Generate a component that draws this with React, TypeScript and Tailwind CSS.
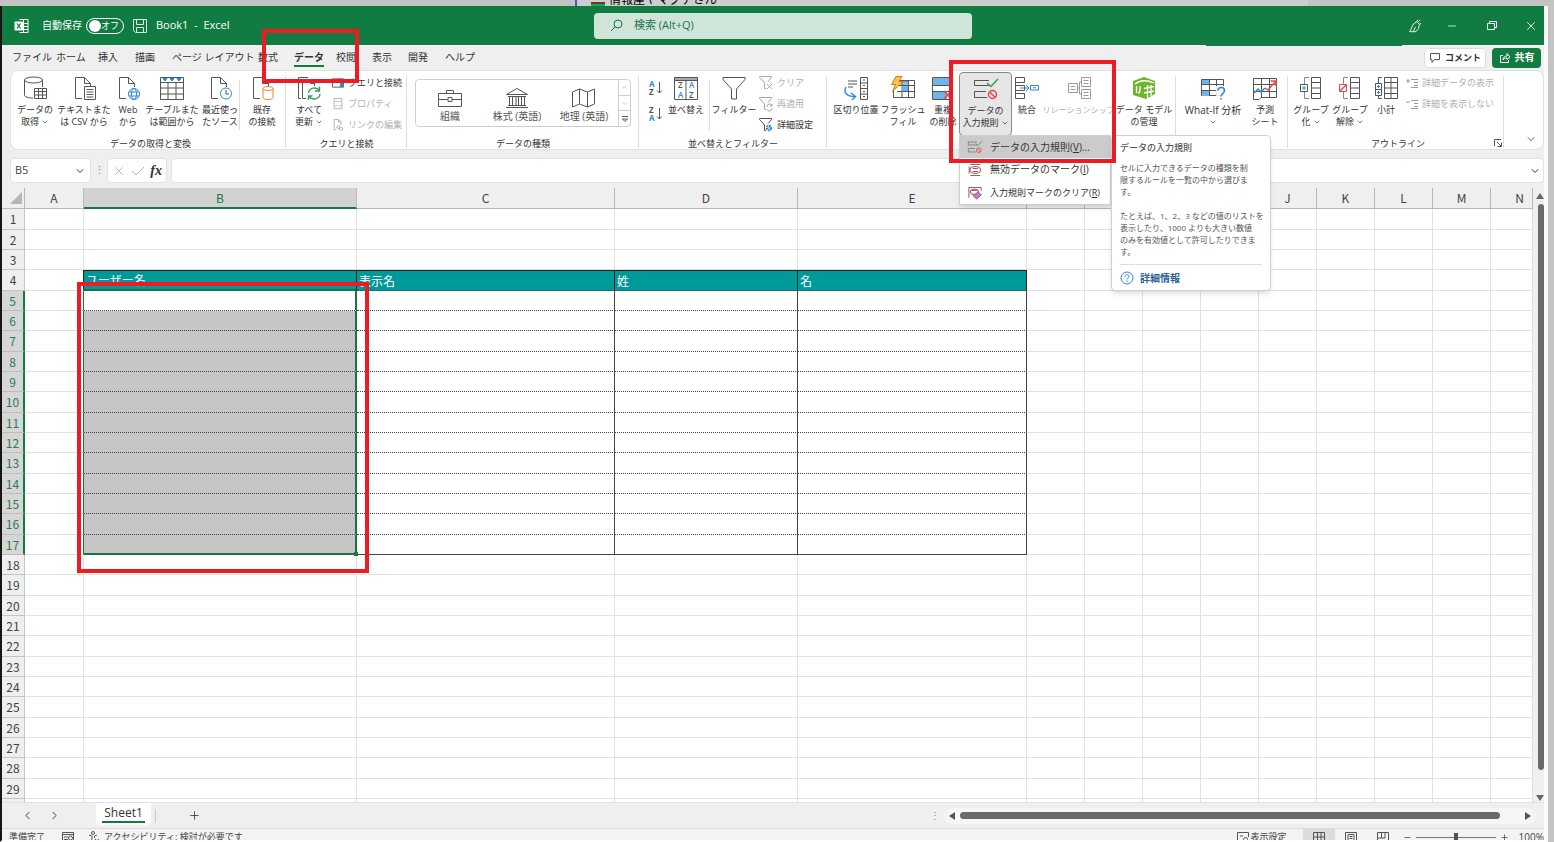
import type { ReactNode } from "react";
import { ChevronDown, ChevronLeft, ChevronRight, ChevronUp, Minus, Plus, Search, X } from "lucide-react";

const GRAY = "#555";
const BLUE = "#2b88d8";
const GREEN = "#3d9a5f";
const RED = "#e5484d";

const Svg = ({
  children,
  className = "size-6",
  box = "0 0 24 24",
}: {
  children: ReactNode;
  className?: string;
  box?: string;
}) => (
  <svg
    viewBox={box}
    className={`shrink-0 overflow-visible ${className}`}
    fill="none"
    stroke={GRAY}
    strokeWidth="1"
    aria-hidden="true"
  >
    {children}
  </svg>
);

const docPath = "M10 22.5H3.5v-21h9l6 6V11M12.5 1.5v6h6";

const DatabaseIcon = () => (
  <Svg>
    <ellipse cx="10.5" cy="4" rx="9" ry="3" />
    <path d="M1.500 4v15c0 1.700 3.500 3 8.500 3M19.500 4v7" />
    <path d="M11.500 12.500h12v10h-12zM11.500 15.500h12M11.500 19h12M15.500 12.500v10M19.500 12.500v10" />
  </Svg>
);

const TextFileIcon = () => (
  <Svg>
    <path d={docPath} />
    <path d="M12.500 10.500h11v13h-11zM14.500 13.500h7M14.500 16h7M14.500 18.500h7M14.500 21h7" />
  </Svg>
);

const WebIcon = () => (
  <Svg>
    <path d={docPath} />
    <g stroke={BLUE}>
      <circle cx="18" cy="18" r="5.500" />
      <ellipse cx="18" cy="18" rx="2.500" ry="5.500" />
      <path d="M13 16h10M13 20h10" />
    </g>
  </Svg>
);

const TableIcon = () => (
  <Svg>
    <path d="M.5 1.500h23v22H.5zM.5 6.500h23M.5 12h23M.5 18h23M8 6.500v17M16 6.500v17" />
    <path d="M3 2.500h4L5 5zM10 2.500h4L12 5zM17 2.500h4L19 5z" fill={BLUE} stroke={BLUE} />
  </Svg>
);

const RecentIcon = () => (
  <Svg>
    <path d={docPath} />
    <circle cx="18" cy="17.500" r="5.500" stroke={BLUE} />
    <path d="M18 14v4h3" />
  </Svg>
);

const ExistingIcon = () => (
  <Svg>
    <path d={docPath} />
    <g stroke="#e8872b">
      <ellipse cx="18" cy="12.500" rx="5" ry="2" />
      <path d="M13 12.500v9c0 2.700 10 2.700 10 0v-9" />
    </g>
  </Svg>
);

const RefreshAllIcon = () => (
  <Svg>
    <path d="M4 22.500H1.500v-21H11M9 22.500H5.500v-19h8l4 4V10M13.500 3.500v4h4" />
    <path
      d="M11.500 17a6 5.500 0 0 1 11-2.500M22.500 10.500v4.500H18M23 18a6 5.500 0 0 1-11 2.500M11.500 24v-4h4"
      stroke={GREEN}
      strokeWidth="1.400"
    />
  </Svg>
);

const QueryIcon = () => (
  <Svg className="h-3 w-3" box="0 0 13 12">
    <path d="M.5 1.500h12v9H.5zM.5 3.500h12" />
    <path d="M9 4h3v6H9z" fill={BLUE} stroke={BLUE} />
  </Svg>
);

const PropertiesIcon = () => (
  <Svg className="h-3 w-3" box="0 0 12 14">
    <g stroke="#a8a8a8">
      <path d="M1.500.5h9v12h-9zM3 4h2M3 9h2M6.500 4H9M6.500 9H9" />
    </g>
  </Svg>
);

const LinksIcon = () => (
  <Svg className="h-3 w-3" box="0 0 12 14">
    <g stroke="#a8a8a8">
      <path d="M4 12.500H1.500V.5h5l3 3V7M6.500.5v3h3" />
      <rect x="4.500" y="8" width="4" height="3" rx="1.500" />
      <rect x="7.500" y="10" width="4" height="3" rx="1.500" />
    </g>
  </Svg>
);

const BriefcaseIcon = () => (
  <Svg className="h-5 w-6" box="0 0 24 20">
    <path d="M.5 5.500h23v13H.5zM8.500 5.500v-3h7v3M.5 11.500h9M14 11.500h9.500M10 9.500h4v4h-4z" />
  </Svg>
);

const BankIcon = () => (
  <Svg className="h-5 w-6" box="0 0 24 20">
    <path d="M1.500 6.500 12 .5l10.500 6zM3 8.500h18M4.500 9v8M7.500 9v8M11 9v8M13.500 9v8M16.500 9v8M19.500 9v8M3 17.500h18M1 19.500h22" />
  </Svg>
);

const MapIcon = () => (
  <Svg className="h-5 w-6" box="0 0 24 20">
    <path d="M.5 4l7-3 8 3 7-3v15l-7 3-8-3-7 3zM7.500 1v15M15.500 4v15" />
  </Svg>
);

const SortIcon = ({ first, second, desc }: { first: string; second: string; desc?: boolean }) => (
  <Svg className="h-4 w-4" box="0 0 16 16">
    <g stroke="none" fontSize="8" fontWeight="700" fontFamily="Open Sans">
      <text x="1" y="7" fill={desc ? GRAY : BLUE}>{first}</text>
      <text x="1" y="15" fill={desc ? BLUE : GRAY}>{second}</text>
    </g>
    <path d="M11.500 2v11M9 10.500l2.500 2.500 2.500-2.500" />
  </Svg>
);

const SortDialogIcon = () => (
  <Svg>
    <path d="M.5 1.500h23v22H.5z" />
    <path d="M.5 1.500h23v3H.5z" fill="#aaa" />
    <path d="M12 4.500v19" />
    <g stroke="none" fontSize="8" fontWeight="600" fontFamily="Open Sans">
      <text x="4" y="12" fill={GRAY}>Z</text>
      <text x="4" y="22" fill={BLUE}>A</text>
      <text x="15" y="12" fill={BLUE}>A</text>
      <text x="15" y="22" fill={GRAY}>Z</text>
    </g>
  </Svg>
);

const FilterIcon = () => (
  <Svg>
    <path d="M1 1.500h22v2L14.500 13v10h-5V13L1 3.500z" />
  </Svg>
);

const SmallFilterIcon = ({ kind }: { kind: "clear" | "reapply" | "advanced" }) => (
  <Svg className="h-3.5 w-3.5" box="0 0 14 14">
    <g stroke={kind === "advanced" ? GRAY : "#a8a8a8"}>
      <path d="M7 12.500H5.500V7L.5 1.500V.5h12v1L9 5.500" />
      {kind === "clear" && <path d="M8 8l5 5M13 8l-5 5" />}
      {kind === "reapply" && <path d="M8 10a2.500 2.500 0 0 1 5-1M13 7v2h-2M13 11a2.500 2.500 0 0 1-5 1" />}
    </g>
    {kind === "advanced" && <circle cx="10" cy="10" r="2" stroke={BLUE} strokeWidth="2.500" strokeDasharray="1.500 .6" />}
  </Svg>
);

const SplitIcon = () => (
  <Svg>
    <path d="M16.500 1.500h7v22h-7zM16.500 7h7M16.500 12.500h7M16.500 18h7M19 4h2M19 9.500h2M19 15.500h2M19 20.500h2M4 5h9M4 8h9M4 11h5" />
    <path d="M2 11c-3 6 1 9.500 9 9.500M7 17l4.500 3.500L8 24" stroke={BLUE} strokeWidth="1.400" />
  </Svg>
);

const FlashFillIcon = () => (
  <Svg>
    <path d="M11 5h6.500v4.500H11z" fill="#8cc1ee" />
    <path d="M8 4.500h15.500v17H2.500V15M6 9.500h17.500M6 15.500h17.500M11 9v12.500M17.500 4.500v17" />
    <path d="M11 10h6v5h-6z" fill="#6fb4ea" stroke="none" />
    <path d="M5 .5h6L8 5.500h4L1.500 15.500l3-7h-4z" fill="#ffc24a" stroke="#cf7b18" />
  </Svg>
);

const DuplicateIcon = () => (
  <Svg>
    <path d="M1.500 1.500h17v22h-17z" />
    <path d="M2 2h16v7H2zM2 16h14v7H2z" fill="#6fb4ea" stroke="none" />
    <path d="M1.500 9.500h17M1.500 15.500h17" />
    <path d="M13 15l7 8M20 15l-7 8" stroke={RED} strokeWidth="1.500" />
  </Svg>
);

const ValidationIcon = ({ className }: { className?: string }) => (
  <Svg className={className}>
    <path d="M15 3.500H.5v5H16M12 14.500H.5v6H13" />
    <path d="M13 6l4 3.500L24 2" stroke={GREEN} strokeWidth="1.500" />
    <circle cx="18.500" cy="17.500" r="4" stroke={RED} strokeWidth="1.500" />
    <path d="M15.500 15l6 5.500" stroke={RED} strokeWidth="1.500" />
  </Svg>
);

const CircleInvalidIcon = () => (
  <Svg className="h-3.5 w-3.5">
    <path d="M4 2.500h17M4 21.500h17M2 6v12M8 9.500h9M8 14.500h9" strokeWidth="1.500" />
    <ellipse cx="12.500" cy="12" rx="9" ry="6" stroke={RED} strokeWidth="2" />
  </Svg>
);

const ClearInvalidIcon = () => (
  <Svg className="h-3.5 w-3.5">
    <path d="M1.500 20V2.500h21V8M6 7.500h10" strokeWidth="1.500" />
    <ellipse cx="11" cy="10" rx="7" ry="4.500" stroke={RED} strokeWidth="1.800" />
    <path d="M9 17l8-7 6 5-8 7.500z" fill="#c77fc9" stroke="#8e4a9e" strokeWidth="1.500" />
  </Svg>
);

const ConsolidateIcon = () => (
  <Svg>
    <path d="M.5 1.500h9v5h-9zM.5 6.500v11M.5 9.500h9v5h-9M.5 17.500h9v5h-9z" />
    <path d="M5 12h9M11 9l3 3-3 3M15.500 9.500h8v4.500h-8zM18 11.800h3" stroke={BLUE} />
  </Svg>
);

const RelationIcon = () => (
  <Svg>
    <g stroke="#9b9b9b">
      <path d="M1.500 7.500h9v9h-9zM14.500 1.500h9v9h-9zM14.500 13.500h9v9h-9zM10.500 12h2v6h2M12.500 12V6h2M3.500 10.500h5M3.500 13.500h5M16.500 4.500h5M16.500 7.500h5M16.500 16.500h5M16.500 19.500h5" />
    </g>
  </Svg>
);

const ModelIcon = () => (
  <Svg>
    <path d="M1 5l11-4 11 4v13l-9 5L1 19z" fill="#6fb52c" stroke="none" />
    <path
      d="M3 8c5-4 12-4 19-1M4.500 10v7M8 10v4c0 2-1 3-2 3M15.500 9v13M19 9v11M12 12.500l10-2M12 17l10-2"
      stroke="#fff"
      strokeWidth="1.300"
    />
  </Svg>
);

const WhatIfIcon = () => (
  <Svg>
    <path d="M.5 3.500h22v16H.5z" />
    <path d="M1 4h7v5H1zM1 14.500h7V20H1z" fill="#6fb4ea" stroke="none" />
    <path d="M.5 8.500h22M.5 14.500h22M8.500 3.500v16M15.500 3.500v16" />
    <path d="M15 10h10v15H15z" fill="#fff" stroke="none" opacity=".85" />
    <path d="M17 14.500c0-4 6.500-4 6.500 0 0 3-3.500 3-3.500 6M20 22v1.500" stroke={BLUE} strokeWidth="1.600" />
  </Svg>
);

const ForecastIcon = () => (
  <Svg>
    <path d="M.5 2.500h23v19H8l-2 2H.5zM.5 8.500h23M.5 15.500h23M8.500 2.500v19M16.500 2.500v19" />
    <path d="M1 17l4-4 3 3 4-4" stroke={BLUE} strokeWidth="1.500" />
    <path d="M12 12l3 2 7-8M17.500 5H23v5" stroke={RED} strokeWidth="1.500" />
  </Svg>
);

const GroupIcon = ({ ungroup }: { ungroup?: boolean }) => (
  <Svg>
    <path d="M12.500 1.500h9v21h-9zM12.500 6.500h9M12.500 12h9M12.500 17.500h9" />
    <path d="M10 1.500H5.500V8M5.500 16v6.500H10" stroke="#888" />
    <path d="M1.500 8.500h7v7h-7z" fill="#fff" stroke={ungroup ? RED : GRAY} />
    {ungroup ? <path d="M2 15l6-6" stroke={RED} strokeWidth="1.500" /> : <path d="M5 10v4M3 12h4" stroke={BLUE} />}
  </Svg>
);

const SubtotalIcon = () => (
  <Svg>
    <path d="M10.500 1.500h13v21h-13zM10.500 6.500h13M10.500 12h13M10.500 17.500h13M17 1.500v21M8 1.500H4.500V7M4.500 20v2.500H8" />
    <path d="M1.500 7.500h6v6h-6zM1.500 13.500h6v6h-6z" />
    <path d="M4.500 9v3M3 10.500h3M4.500 15v3M3 16.500h3" stroke={BLUE} />
  </Svg>
);

const DetailIcon = ({ sign }: { sign: "plus" | "minus" }) => (
  <Svg className="h-3 w-3" box="0 0 12 12">
    <g stroke="#9b9b9b">
      <path d={sign === "plus" ? "M0 4h4M2 2v4" : "M0 4h4"} />
      <path d="M5 2.500h7M8 5.500h4M8 8.500h4M5 10.500h7" />
    </g>
  </Svg>
);

const ExcelIcon = () => (
  <Svg className="size-4" box="0 0 16 16">
    <g stroke="#fff">
      <path d="M5.500 1.500h8.500v13H5.500M9.500 1.500v13M5 5.500h9M9 8.500h5M5 11.500h9" />
      <path d="M1 4h7.500v8H1z" fill="#fff" />
      <path d="M3 5.500l3.500 5M6.500 5.500L3 10.500" stroke="#107c41" strokeWidth="1.300" />
    </g>
  </Svg>
);

const SaveIcon = () => (
  <Svg className="size-4" box="0 0 16 16">
    <path d="M1.500 1.500h13v13h-11l-2-2zM4.500 1.500v5h7v-5M4.500 14.500v-5h7v5" stroke="#d9efe2" />
  </Svg>
);

const PenIcon = () => (
  <Svg className="size-3.5" box="0 0 16 16">
    <path d="M2 14.500L6 6l4-3 3 3-1 5-3 3.500zM6 14.500L8.500 9M10 3l1-2M13 6l2-1M12 3l2-2" stroke="#fff" />
  </Svg>
);

type BigButtonProps = {
  icon: ReactNode;
  lines: string[];
  width: string;
  text?: string;
  disabled?: boolean;
  caret?: boolean;
};

const BigButton = ({ icon, lines, width, text = "text-[9px]", disabled, caret }: BigButtonProps) => (
  <button
    disabled={disabled}
    className={`flex h-16 shrink-0 flex-col items-center gap-1 whitespace-nowrap pt-1 leading-3 ${width} ${text} ${
      disabled ? "text-[#b0b0b0]" : ""
    }`}
  >
    {icon}
    <span className="flex flex-col items-center">
      {lines.map((line, i) => (
        <span key={line} className="flex h-3 items-center gap-0.5">
          {line}
          {caret && i === lines.length - 1 && <ChevronDown size={8} />}
        </span>
      ))}
    </span>
  </button>
);

const SmallButton = ({ icon, label, disabled }: { icon: ReactNode; label: string; disabled?: boolean }) => (
  <button
    disabled={disabled}
    className={`flex h-[21px] items-center gap-1 whitespace-nowrap text-[9px] ${disabled ? "text-[#b0b0b0]" : ""}`}
  >
    {icon}
    {label}
  </button>
);

const Group = ({ label, width, children }: { label?: string; width: string; children: ReactNode }) => (
  <section className={`relative flex shrink-0 flex-col ${width}`}>
    <div className="flex h-16 shrink-0">{children}</div>
    <div className="text-center text-[9px] leading-4">{label}</div>
    <span className="absolute right-0 top-1 h-[72px] w-px bg-[#dcdcdc]" />
  </section>
);

const Divider = () => <span className="mt-2 h-[50px] w-px shrink-0 bg-[#dcdcdc]" />;

const tabs = [
  { name: "ファイル", width: "w-[44px]" },
  { name: "ホーム", width: "w-[42px]" },
  { name: "挿入", width: "w-[37px]" },
  { name: "描画", width: "w-[37px]" },
  { name: "ページ レイアウト", width: "w-[86px]" },
  { name: "数式", width: "w-[36px]" },
  { name: "データ", width: "w-[42px]" },
  { name: "校閲", width: "w-[36px]" },
  { name: "表示", width: "w-[36px]" },
  { name: "開発", width: "w-[37px]" },
  { name: "ヘルプ", width: "w-[42px]" },
];

const TitleBar = () => (
  <header className="relative flex h-[39px] shrink-0 items-center bg-[#107c41] text-white">
    <div className="flex w-[592px] shrink-0 items-center pl-3 text-[10px]">
      <ExcelIcon />
      <label className="ml-3 flex items-center gap-1">
        自動保存
        <input type="checkbox" className="peer sr-only" />
        <span className="flex h-4 w-[38px] items-center justify-between rounded-full border border-white pl-0.5 pr-1 text-[9px]">
          <span className="size-3 rounded-full bg-white" />
          オフ
        </span>
      </label>
      <button aria-label="上書き保存" className="ml-2">
        <SaveIcon />
      </button>
      <span className="ml-2 text-[11px]">Book1&nbsp; -&nbsp; Excel</span>
    </div>
    <label className="flex h-[26px] w-[378px] items-center gap-2.5 rounded-sm bg-[#cfe5d9] px-4 text-[#1c7445]">
      <Svg className="size-3.5" box="0 0 14 14">
        <circle cx="8" cy="5" r="4" stroke="#1c7445" />
        <path d="M5 8l-4 4" stroke="#1c7445" />
      </Svg>
      <input
        aria-label="検索"
        placeholder="検索 (Alt+Q)"
        className="w-full text-[11px] outline-none placeholder:text-[#1c7445]"
      />
    </label>
    <div className="ml-auto flex items-center gap-6 pr-1.5">
      <button aria-label="ペン"><PenIcon /></button>
      <button aria-label="最小化"><Minus size={12} strokeWidth={1.5} /></button>
      <button aria-label="元に戻す" className="ml-1">
        <Svg className="size-3" box="0 0 12 12">
          <path d="M1.500 3.500h7v6h-7zM3.500 3.500v-2h7v6h-2" stroke="#fff" />
        </Svg>
      </button>
      <button aria-label="閉じる" className="ml-0.5"><X size={14} strokeWidth={1.5} /></button>
    </div>
    <span className="absolute right-[142px] top-full h-px w-[196px] bg-[#107c41]" />
  </header>
);

const TabRow = () => (
  <nav className="flex h-[25px] shrink-0 items-center justify-between pl-2.5 pr-[3px]">
    <div className="flex">
      {tabs.map((tab) => (
        <button key={tab.name} className={`flex shrink-0 whitespace-nowrap text-left text-[10px] leading-4 ${tab.width}`}>
          <span className={tab.name === "データ" ? "border-b-2 border-[#107c41] font-bold" : "border-b-2 border-transparent"}>
            {tab.name}
          </span>
        </button>
      ))}
    </div>
    <div className="flex gap-1.5 text-[9px] font-bold">
      <button className="flex h-5 items-center gap-1 rounded border border-[#ddd] bg-white px-1">
        <Svg className="size-3" box="0 0 12 12">
          <path d="M1.500 1.500h9v6h-5l-2.500 3v-3H1.500z" />
        </Svg>
        コメント
      </button>
      <button className="flex h-5 w-[49px] items-center justify-center gap-1 rounded bg-[#107c41] text-[10px] text-white">
        <Svg className="size-3" box="0 0 12 12">
          <path d="M4 3.500H1.500v7h8V8M4 8c0-3 2-4 4-4V1.500L11 5 8 7.500V6C6 6 5 6.500 4 8z" stroke="#fff" />
        </Svg>
        共有
      </button>
    </div>
  </nav>
);

const ValidationMenu = () => (
  <div className="absolute -left-px top-full z-20 flex items-start text-[10px]">
    <ul role="menu" className="w-[152px] border border-[#d0d0d0] bg-white shadow-md">
      <li>
        <button role="menuitem" className="flex h-[22px] w-full items-center gap-2 whitespace-nowrap bg-[#cbcbcb] pl-2">
          <ValidationIcon className="h-3.5 w-3.5" />
          <span>データの入力規則(<u>V</u>)...</span>
        </button>
      </li>
      <li>
        <button role="menuitem" className="flex h-[23px] w-full items-center gap-2 whitespace-nowrap pl-2">
          <CircleInvalidIcon />
          <span>無効データのマーク(<u>I</u>)</span>
        </button>
      </li>
      <li>
        <button role="menuitem" className="flex h-[23px] w-full items-center gap-2 whitespace-nowrap pl-2 text-[9px]">
          <ClearInvalidIcon />
          <span>入力規則マークのクリア(<u>R</u>)</span>
        </button>
      </li>
    </ul>
    <div role="tooltip" className="w-[160px] rounded-sm border border-[#d0d0d0] bg-white px-2 text-[8px] leading-3 text-[#555] shadow-md">
      <p className="pb-1.5 pt-1 text-[9px] font-medium leading-4">データの入力規則</p>
      <p className="mb-3 whitespace-nowrap">
        セルに入力できるデータの種類を制
        <br />
        限するルールを一覧の中から選びま
        <br />
        す。
      </p>
      <p className="whitespace-nowrap">
        たとえば、1、2、3 などの値のリストを
        <br />
        表示したり、1000 よりも大きい数値
        <br />
        のみを有効値として許可したりできま
        <br />
        す。
      </p>
      <a href="#" className="mt-1.5 flex h-[26px] items-center gap-1.5 border-t border-[#ddd] text-[10px] font-bold text-[#2a5f95]">
        <Svg className="size-3.5" box="0 0 14 14">
          <circle cx="7" cy="7" r="6" stroke={BLUE} />
          <path d="M5 5.500c0-2.500 4-2.500 4 0 0 1.500-2 1.500-2 3M7 9.500v1.500" stroke={BLUE} />
        </Svg>
        詳細情報
      </a>
    </div>
  </div>
);

const Ribbon = () => (
  <div className="relative ml-2 flex h-20 shrink-0 rounded-lg border border-[#e2e2e2] bg-white pt-px">
    <Group label="データの取得と変換" width="w-[275px] pl-1">
      <BigButton icon={<DatabaseIcon />} lines={["データの", "取得"]} width="w-[40px]" caret />
      <BigButton icon={<TextFileIcon />} lines={["テキストまた", "は CSV から"]} width="w-[58px]" />
      <BigButton icon={<WebIcon />} lines={["Web", "から"]} width="w-[30px]" />
      <BigButton icon={<TableIcon />} lines={["テーブルまた", "は範囲から"]} width="w-[58px]" />
      <BigButton icon={<RecentIcon />} lines={["最近使っ", "たソース"]} width="w-[38px]" />
      <Divider />
      <BigButton icon={<ExistingIcon />} lines={["既存", "の接続"]} width="w-[44px]" />
    </Group>

    <Group label="クエリと接続" width="w-[121px]">
      <BigButton icon={<RefreshAllIcon />} lines={["すべて", "更新"]} width="w-[46px]" caret />
      <div className="flex flex-col">
        <SmallButton icon={<QueryIcon />} label="クエリと接続" />
        <SmallButton icon={<PropertiesIcon />} label="プロパティ" disabled />
        <SmallButton icon={<LinksIcon />} label="リンクの編集" disabled />
      </div>
    </Group>

    <Group label="データの種類" width="w-[232px]">
      <div className="ml-2 mt-[7px] flex h-12 w-[216px] rounded border border-[#cfcfcf] text-[10px] text-[#555]">
        <button className="flex w-[68px] flex-col items-center pt-2 leading-4"><BriefcaseIcon />組織</button>
        <button className="flex w-[66px] flex-col items-center pt-2 leading-4"><BankIcon />株式 (英語)</button>
        <button className="flex w-[68px] flex-col items-center pt-2 leading-4"><MapIcon />地理 (英語)</button>
        <div className="flex w-3 flex-col divide-y divide-[#cfcfcf] border-l border-[#cfcfcf]">
          <button aria-label="上へ" className="flex flex-1 items-center justify-center text-[#aaa]"><ChevronUp size={7} /></button>
          <button aria-label="下へ" className="flex flex-1 items-center justify-center text-[#aaa]"><ChevronDown size={7} /></button>
          <button aria-label="その他" className="flex flex-1 items-center justify-center">
            <Svg className="size-2" box="0 0 8 8"><path d="M1 1.500h6M1.500 4L4 6.500 6.500 4z" /></Svg>
          </button>
        </div>
      </div>
    </Group>

    <Group label="並べ替えとフィルター" width="w-[188px]">
      <div className="flex w-[34px] flex-col items-center gap-2.5 pt-2">
        <button aria-label="昇順"><SortIcon first="A" second="Z" /></button>
        <button aria-label="降順"><SortIcon first="Z" second="A" desc /></button>
      </div>
      <BigButton icon={<SortDialogIcon />} lines={["並べ替え"]} width="w-[26px] mr-2.5" />
      <Divider />
      <BigButton icon={<FilterIcon />} lines={["フィルター"]} width="w-[48px]" />
      <div className="flex flex-col pl-px">
        <SmallButton icon={<SmallFilterIcon kind="clear" />} label="クリア" disabled />
        <SmallButton icon={<SmallFilterIcon kind="reapply" />} label="再適用" disabled />
        <SmallButton icon={<SmallFilterIcon kind="advanced" />} label="詳細設定" />
      </div>
    </Group>

    <Group width="w-[349px] pl-1.5">
      <BigButton icon={<SplitIcon />} lines={["区切り位置"]} width="w-[46px]" />
      <BigButton icon={<FlashFillIcon />} lines={["フラッシュ", "フィル"]} width="w-[48px]" />
      <BigButton icon={<DuplicateIcon />} lines={["重複", "の削除"]} width="w-[32px]" />
      <div className="relative h-16 shrink-0 rounded border border-[#8a8a8a] bg-[#e6e6e6]">
        <BigButton icon={<ValidationIcon />} lines={["データの", "入力規則"]} width="w-[51px]" caret />
        <ValidationMenu />
      </div>
      <BigButton icon={<ConsolidateIcon />} lines={["統合"]} width="w-[30px]" />
      <BigButton
        icon={<RelationIcon />}
        lines={["リレーションシップ"]}
        width="w-[73px]"
        text="text-[8px]"
        disabled
      />
      <BigButton icon={<ModelIcon />} lines={["データ モデル", "の管理"]} width="w-[58px]" />
    </Group>

    <Group width="w-[112px]">
      <BigButton icon={<WhatIfIcon />} lines={["What-If 分析", ""]} width="w-[74px]" text="text-[10px]" caret />
      <BigButton icon={<ForecastIcon />} lines={["予測", "シート"]} width="w-[30px]" />
    </Group>

    <Group label="アウトライン" width="w-[216px] pl-1">
      <BigButton icon={<GroupIcon />} lines={["グループ", "化"]} width="w-[38px]" caret />
      <BigButton icon={<GroupIcon ungroup />} lines={["グループ", "解除"]} width="w-[40px]" caret />
      <BigButton icon={<SubtotalIcon />} lines={["小計"]} width="w-[32px] mr-1" />
      <div className="flex flex-col">
        <SmallButton icon={<DetailIcon sign="plus" />} label="詳細データの表示" disabled />
        <SmallButton icon={<DetailIcon sign="minus" />} label="詳細を表示しない" disabled />
      </div>
      <button aria-label="アウトラインの設定" className="absolute bottom-0.5 right-0.5">
        <Svg className="size-2" box="0 0 8 8"><path d="M.5 7V.5H7M3 3l4 4M7.500 3.500v4h-4" /></Svg>
      </button>
    </Group>
    <button aria-label="リボンを折りたたむ" className="mb-1 ml-auto mr-1.5 self-end">
      <ChevronDown size={12} strokeWidth={1.5} />
    </button>
  </div>
);

const FormulaBar = () => (
  <div className="flex h-[38px] shrink-0 items-center pb-[5px] pl-2 pt-2">
    <div className="flex h-[25px] w-[81px] items-center rounded border border-[#e2e2e2] bg-white px-1">
      <input aria-label="名前ボックス" defaultValue="B5" className="w-full text-[11px] text-[#444] outline-none" />
      <ChevronDown size={12} className="shrink-0" />
    </div>
    <span className="w-4 text-center text-[11px] text-[#888]">⋮</span>
    <div className="flex h-[25px] w-[60px] items-center justify-between rounded border border-[#e2e2e2] bg-white px-1 text-[#b5b5b5]">
      <X size={14} strokeWidth={1.5} className="shrink-0" />
      <Svg className="size-3.5" box="0 0 14 14"><path d="M1 7l4 4 8-8" stroke="#b5b5b5" /></Svg>
      <button className="font-['Liberation_Serif',serif] text-sm font-bold italic text-[#333]">fx</button>
    </div>
    <div className="ml-1 flex h-[25px] flex-1 items-center rounded border border-[#e2e2e2] bg-white px-0.5">
      <input aria-label="数式バー" className="w-full text-[11px] outline-none" />
      <ChevronDown size={12} className="shrink-0" />
    </div>
  </div>
);

const columns = [
  { name: "A", width: "w-[59px]" },
  { name: "B", width: "w-[273px]" },
  { name: "C", width: "w-[258px]" },
  { name: "D", width: "w-[183px]" },
  { name: "E", width: "w-[229px]" },
  { name: "F", width: "w-[58px]" },
  { name: "G", width: "w-[58px]" },
  { name: "H", width: "w-[58px]" },
  { name: "I", width: "w-[58px]" },
  { name: "J", width: "w-[58px]" },
  { name: "K", width: "w-[58px]" },
  { name: "L", width: "w-[58px]" },
  { name: "M", width: "w-[58px]" },
  { name: "N", width: "w-auto" },
];

const headings: Record<string, string> = { B: "ユーザー名", C: "表示名", D: "姓", E: "名" };
const rows = Array.from({ length: 30 }, (_, i) => i + 1);

const cellClass = (col: string, row: number) => {
  const inTable = col in headings && row >= 4 && row <= 17;
  if (inTable && row === 4) {
    return col === "B"
      ? "border-b-2 border-b-[#1e7145] border-r border-r-[#222] border-t border-t-[#222] bg-[#009999]"
      : "border-b border-b-[#444] [border-bottom-style:dotted] border-r border-r-[#222] border-t border-t-[#222] bg-[#009999]";
  }
  if (inTable && col === "B") {
    const fill = row === 5 ? "bg-white" : "bg-[#c6c6c6]";
    const bottom = row === 17 ? "border-b-2 border-b-[#1e7145]" : "border-b border-b-[#444] [border-bottom-style:dotted]";
    return `relative border-r-2 border-r-[#1e7145] ${fill} ${bottom}`;
  }
  if (inTable) {
    return row === 17
      ? "border-r border-b border-[#444]"
      : "border-r border-b border-[#444] [border-bottom-style:dotted]";
  }
  if (col === "A" && row >= 5 && row <= 17) return "border-b border-r border-b-[#e1e1e1] border-r-[#1e7145]";
  if (col === "A" && row === 4) return "border-b border-r border-b-[#e1e1e1] border-r-[#222]";
  return "border-b border-r border-[#e1e1e1]";
};

const Sheet = () => (
  <div className="flex min-h-0 flex-1">
    <div className="min-w-0 flex-1 overflow-hidden bg-white">
      <table className="w-full table-fixed border-separate border-spacing-0 font-['Noto_Sans_CJK_JP',sans-serif] text-xs leading-none text-[#444]">
        <colgroup>
          <col className="w-[23px]" />
          {columns.map((col) => (
            <col key={col.name} className={col.width} />
          ))}
        </colgroup>
        <thead>
          <tr className="h-[21px] bg-[#efefef]">
            <th className="border-b border-r border-[#b8b8b8] p-0">
              <Svg className="ml-1.5 size-4" box="0 0 16 16">
                <path d="M14 2v12H2z" fill="#b5b5b5" stroke="none" />
              </Svg>
            </th>
            {columns.map((col) => (
              <th
                key={col.name}
                className={`p-0 font-normal ${
                  col.name === "B"
                    ? "border-b-2 border-r border-b-[#107c41] border-r-[#b8b8b8] bg-[#d2d2d2] text-[#1e7145]"
                    : "border-b border-r border-[#b8b8b8]"
                } ${col.name === "N" ? "pl-4" : ""}`}
              >
                {col.name}
              </th>
            ))}
          </tr>
        </thead>
        <tbody>
          {rows.map((row) => (
            <tr key={row} className="h-[20px] nth-[3n+1]:h-[21px]">
              <th
                className={`overflow-hidden p-0 font-normal ${
                  row >= 5 && row <= 17
                    ? "border-b border-r-2 border-b-[#bdbdbd] border-r-[#107c41] bg-[#d6d6d6] text-[#2c7a50]"
                    : "border-b border-r border-[#c4c4c4] bg-[#efefef]"
                }`}
              >
                {row < 30 && row}
              </th>
              {columns.map((col) => (
                <td key={col.name} className={`whitespace-nowrap py-0 pl-0.5 pr-0 text-white ${cellClass(col.name, row)}`}>
                  {row === 4 && headings[col.name]}
                  {row === 17 && col.name === "B" && (
                    <span className="absolute -bottom-[3px] -right-[3px] size-1 bg-[#107c41]" />
                  )}
                </td>
              ))}
            </tr>
          ))}
        </tbody>
      </table>
    </div>
    <div className="flex w-[11px] shrink-0 flex-col items-end bg-[#efefef] pt-1">
      <Svg className="size-2" box="0 0 8 8"><path d="M4 1l4 6H0z" fill="#666" stroke="none" /></Svg>
      <span className="mt-1 w-1.5 flex-1 rounded-full bg-[#6b6b6b]" />
      <Svg className="mt-6 size-2" box="0 0 8 8"><path d="M4 7l4-6H0z" fill="#666" stroke="none" /></Svg>
    </div>
  </div>
);

const SheetTabs = () => (
  <div className="flex h-[26px] shrink-0 items-center border-t border-[#e1e1e1]">
    <div className="flex w-[94px] items-center gap-3.5 pl-[19px] text-[#888]">
      <button aria-label="前のシート"><ChevronLeft size={13} /></button>
      <button aria-label="次のシート"><ChevronRight size={13} /></button>
    </div>
    <button className="flex h-[22px] w-[55px] justify-center self-start rounded-b bg-white text-xs">
      <span className="h-5 border-b-2 border-[#107c41] px-0.5 leading-5">Sheet1</span>
    </button>
    <span className="ml-1 h-3.5 w-px bg-[#ccc]" />
    <button aria-label="新しいシート" className="ml-8"><Plus size={13} strokeWidth={1.5} /></button>
    <div className="ml-auto flex w-[614px] items-center pr-2">
      <span className="w-2 text-center text-[10px] text-[#888]">⋮</span>
      <div className="ml-1.5 flex h-4 flex-1 items-center gap-1 rounded-full bg-[#f6f6f6] px-1">
        <Svg className="size-2" box="0 0 8 8"><path d="M7 0v8L1 4z" fill="#555" stroke="none" /></Svg>
        <span className="mr-5 h-[7px] flex-1 rounded-full bg-[#6b6b6b]" />
        <Svg className="size-2" box="0 0 8 8"><path d="M1 0v8l6-4z" fill="#555" stroke="none" /></Svg>
      </div>
    </div>
  </div>
);

const StatusBar = () => (
  <footer className="h-3 shrink-0 overflow-hidden border-t border-[#dcdcdc] bg-[#f3f3f3] text-[9px] leading-4 text-[#444]">
    <div className="flex h-4 items-center whitespace-nowrap pl-[7px]">
      <span className="w-[53px]">準備完了</span>
      <Svg className="h-3 w-3" box="0 0 12 12"><path d="M.5 1.500h11v9H.5zM.5 3.500h11M2 6h4M2 8.500h4" /><circle cx="8.500" cy="7" r="2" /></Svg>
      <Svg className="ml-3.5 h-3 w-3" box="0 0 12 12">
        <circle cx="5" cy="2" r="1.500" />
        <path d="M1 4l3 1v3l-2 3.500M9 4L6.500 5v2M7 8l4 3.500M11 8l-4 3.500" />
      </Svg>
      <span className="ml-1">アクセシビリティ: 検討が必要です</span>
      <div className="ml-auto flex items-center">
        <Svg className="h-3 w-3" box="0 0 12 12"><path d="M6 10.500H.5v-9h11V6M3 5h3" /><circle cx="8.500" cy="8.500" r="2" /></Svg>
        <span className="ml-0.5 mr-4">表示設定</span>
        <button aria-label="標準" className="flex h-4 w-8 items-center justify-center bg-[#dcdcdc]">
          <Svg className="h-3 w-3" box="0 0 12 12"><path d="M.5 1.500h11v9H.5zM.5 6h11M4.500 1.500v9M8 1.500v9" /></Svg>
        </button>
        <button aria-label="ページ レイアウト" className="flex h-4 w-8 items-center justify-center">
          <Svg className="h-3 w-3" box="0 0 12 12"><path d="M.5 1.500h11v9H.5zM3 3.500h6v7H3zM4.500 5.500h3M4.500 7.500h3" /></Svg>
        </button>
        <button aria-label="改ページ プレビュー" className="flex h-4 w-8 items-center justify-center">
          <Svg className="h-3 w-3" box="0 0 12 12"><path d="M.5 1.500h11v9H.5zM4.500 1.500V7H.5M8 1.500V7H4.500" /></Svg>
        </button>
        <button aria-label="縮小" className="ml-1"><Minus size={9} /></button>
        <input
          type="range"
          aria-label="ズーム"
          defaultValue={50}
          className="mx-1 h-px w-20 appearance-none bg-[#777] [&::-webkit-slider-thumb]:h-2 [&::-webkit-slider-thumb]:w-1 [&::-webkit-slider-thumb]:appearance-none [&::-webkit-slider-thumb]:bg-[#555]"
        />
        <button aria-label="拡大"><Plus size={9} /></button>
        <span className="ml-2.5 text-[10px]">100%</span>
      </div>
    </div>
  </footer>
);

const App = () => (
  <div className="relative flex h-screen flex-col overflow-hidden bg-[#c4c4c4] font-['Open_Sans','Noto_Sans_CJK_JP',sans-serif] text-[#333]">
    <div className="flex h-1.5 shrink-0 items-end overflow-hidden text-xs leading-3 text-black">
      <span className="ml-[575px] h-full w-0.5 shrink-0 bg-[#5457a6]" />
      <span className="flex h-full w-[731px] items-end gap-1 bg-[#cdcdcd] pl-3.5">
        <span className="h-1 w-3.5 border-t-2 border-[#7a3030] bg-[#18a850]" />
        情報屋ヤマグチさん
      </span>
    </div>

    <div className="mr-1.5 flex min-h-0 flex-1 flex-col border-b-2 border-l-2 border-r-4 border-b-white border-l-[#161616] border-r-[#fafafa] bg-[#efefef]">
      <TitleBar />
      <TabRow />
      <Ribbon />
      <FormulaBar />
      <Sheet />
      <SheetTabs />
      <StatusBar />
    </div>

    {/* Red highlight frames */}
    <span className="pointer-events-none absolute left-[262px] top-[29px] z-30 h-[54px] w-[97px] border-4 border-[#ed1c24]" />
    <span className="pointer-events-none absolute left-[949px] top-[60px] z-30 h-[103px] w-[167px] border-4 border-[#ed1c24]" />
    <span className="pointer-events-none absolute left-[77px] top-[282px] z-30 h-[291px] w-[292px] border-4 border-[#ed1c24]" />
  </div>
);

export default App;
